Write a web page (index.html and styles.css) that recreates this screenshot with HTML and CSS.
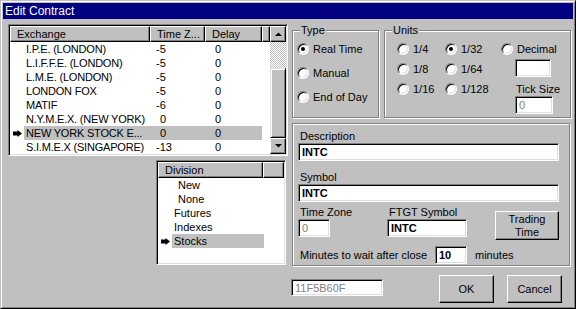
FILE: index.html
```html
<!DOCTYPE html>
<html lang="en">
<head>
  <meta charset="UTF-8">
  <title>Edit Contract</title>
  <link rel="stylesheet" href="styles.css">
</head>
<body>

  <div class="window">
    <div class="titlebar">Edit Contract</div>

    <div class="main">
      <div class="left">

        <div class="listview exchanges">
          <div class="lv-body">
            <div class="lv-header">
              <div class="hcell h-name">Exchange</div>
              <div class="hcell h-tz">Time Z...</div>
              <div class="hcell h-delay">Delay</div>
              <div class="hcell h-fill"></div>
            </div>
            <div class="lv-row"><span class="mark"></span><span class="cells"><span class="c-name">I.P.E. (LONDON)</span><span class="c-tz">-5</span><span class="c-delay">0</span></span></div>
            <div class="lv-row"><span class="mark"></span><span class="cells"><span class="c-name">L.I.F.F.E. (LONDON)</span><span class="c-tz">-5</span><span class="c-delay">0</span></span></div>
            <div class="lv-row"><span class="mark"></span><span class="cells"><span class="c-name">L.M.E. (LONDON)</span><span class="c-tz">-5</span><span class="c-delay">0</span></span></div>
            <div class="lv-row"><span class="mark"></span><span class="cells"><span class="c-name">LONDON FOX</span><span class="c-tz">-5</span><span class="c-delay">0</span></span></div>
            <div class="lv-row"><span class="mark"></span><span class="cells"><span class="c-name">MATIF</span><span class="c-tz">-6</span><span class="c-delay">0</span></span></div>
            <div class="lv-row"><span class="mark"></span><span class="cells"><span class="c-name">N.Y.M.E.X. (NEW YORK)</span><span class="c-tz pos">0</span><span class="c-delay">0</span></span></div>
            <div class="lv-row selected">
              <span class="mark">
                <svg width="9" height="7" viewBox="0 0 9 7"><path d="M0 1.5h4.5V0L9 3.5 4.5 7V5.5H0z" fill="#000"/></svg>
              </span>
              <span class="cells"><span class="c-name">NEW YORK STOCK E...</span><span class="c-tz pos">0</span><span class="c-delay">0</span></span>
            </div>
            <div class="lv-row"><span class="mark"></span><span class="cells"><span class="c-name">S.I.M.E.X (SINGAPORE)</span><span class="c-tz">-13</span><span class="c-delay">0</span></span></div>
          </div>
          <div class="scrollbar">
            <div class="sb-btn"><svg width="7" height="4" viewBox="0 0 7 4"><path d="M0 4h7L3.5 0.5z" fill="#000"/></svg></div>
            <div class="sb-track"></div>
            <div class="sb-thumb"></div>
            <div class="sb-btn"><svg width="7" height="4" viewBox="0 0 7 4"><path d="M0 0h7L3.5 3.5z" fill="#000"/></svg></div>
          </div>
        </div>

        <div class="listview divisions">
          <div class="lv-body">
            <div class="lv-header">
              <div class="hcell h-division">Division</div>
              <div class="hcell h-dfill"></div>
            </div>
            <div class="lv-row"><span class="mark"></span><span class="cells"><span class="d-name indent">New</span></span></div>
            <div class="lv-row"><span class="mark"></span><span class="cells"><span class="d-name indent">None</span></span></div>
            <div class="lv-row"><span class="mark"></span><span class="cells"><span class="d-name">Futures</span></span></div>
            <div class="lv-row"><span class="mark"></span><span class="cells"><span class="d-name">Indexes</span></span></div>
            <div class="lv-row selected">
              <span class="mark">
                <svg width="9" height="7" viewBox="0 0 9 7"><path d="M0 1.5h4.5V0L9 3.5 4.5 7V5.5H0z" fill="#000"/></svg>
              </span>
              <span class="cells"><span class="d-name">Stocks</span></span>
            </div>
          </div>
        </div>

      </div>

      <div class="right">
        <div class="top-row">
          <div class="group type-group">
            <span class="group-label">Type</span>
            <div class="type-list">
              <div class="radio"><span class="radio-dot checked"></span>Real Time</div>
              <div class="radio"><span class="radio-dot"></span>Manual</div>
              <div class="radio"><span class="radio-dot"></span>End of Day</div>
            </div>
          </div>

          <div class="group units-group">
            <span class="group-label">Units</span>
            <div class="units-body">
              <div class="units-grid">
                <div class="radio"><span class="radio-dot"></span>1/4</div>
                <div class="radio"><span class="radio-dot checked"></span>1/32</div>
                <div class="radio"><span class="radio-dot"></span>1/8</div>
                <div class="radio"><span class="radio-dot"></span>1/64</div>
                <div class="radio"><span class="radio-dot"></span>1/16</div>
                <div class="radio"><span class="radio-dot"></span>1/128</div>
              </div>
              <div class="units-extra">
                <div class="radio"><span class="radio-dot"></span>Decimal</div>
                <input class="edit decimal-edit" type="text" value="">
                <span class="tick-label">Tick Size</span>
                <input class="edit tick-edit disabled" type="text" value="0" disabled>
              </div>
            </div>
          </div>
        </div>

        <div class="group panel">
          <div class="field-label">Description</div>
          <input class="edit desc-edit" type="text" value="INTC">

          <div class="field-label symbol-label">Symbol</div>
          <input class="edit desc-edit" type="text" value="INTC">

          <div class="field-row">
            <div class="tz-col">
              <div class="field-label">Time Zone</div>
              <input class="edit tz-edit disabled" type="text" value="0" disabled>
            </div>
            <div class="ftgt-col">
              <div class="field-label">FTGT Symbol</div>
              <input class="edit ftgt-edit" type="text" value="INTC">
            </div>
            <button class="btn trading-btn">Trading<br>Time</button>
          </div>

          <div class="minutes-row">
            <span class="minutes-label">Minutes to wait after close</span>
            <input class="edit minutes-edit" type="text" value="10">
            <span class="minutes-unit">minutes</span>
          </div>
        </div>

        <div class="bottom-row">
          <input class="edit id-edit disabled" type="text" value="11F5B60F" disabled>
          <button class="btn ok-btn">OK</button>
          <button class="btn cancel-btn">Cancel</button>
        </div>
      </div>
    </div>
  </div>

</body>
</html>
```

FILE: styles.css
```css
* {
  box-sizing: border-box;
}

body {
  margin: 0;
  font-family: "Liberation Sans", Arial, sans-serif;
  font-size: 11px;
  color: #000;
  background: #c0c0c0;
}

.window {
  width: 576px;
  height: 309px;
  padding: 2px;
  overflow: hidden;
  background: #c0c0c0;
  border: 1px solid;
  border-color: #c0c0c0 #000 #000 #c0c0c0;
  box-shadow: inset 1px 1px #fff, inset -1px -1px #808080;
}

.titlebar {
  height: 16px;
  padding-left: 2px;
  line-height: 16px;
  font-size: 12px;
  background: #000080;
  color: #fff;
}

.main {
  display: flex;
}

.left {
  width: 287px;
  padding: 5px 0 0 5px;
}

/* list views */

.listview {
  display: flex;
  padding: 1px;
  overflow: hidden;
  background: #fff;
  border: 1px solid;
  border-color: #808080 #fff #fff #808080;
  box-shadow: inset 1px 1px #000, inset -1px -1px #dfdfdf;
}

.exchanges {
  width: 280px;
  height: 132px;
}

.divisions {
  width: 130px;
  height: 105px;
  margin: 4px 0 0 148px;
}

.lv-body {
  flex: 1;
  overflow: hidden;
}

.lv-header {
  display: flex;
  height: 16px;
}

.hcell {
  padding-left: 6px;
  line-height: 14px;
  white-space: nowrap;
  overflow: hidden;
  background: #c0c0c0;
  border: 1px solid;
  border-color: #fff #000 #000 #fff;
  box-shadow: inset -1px -1px #808080;
}

.h-name { width: 140px; }
.h-tz { width: 55px; }
.h-delay { width: 57px; }
.h-fill { flex: 1; }
.h-division { width: 105px; }
.h-dfill { flex: 1; }

.lv-row {
  display: flex;
  height: 14px;
  line-height: 14px;
  white-space: nowrap;
}

.mark {
  width: 14px;
  padding-left: 3px;
  display: flex;
  align-items: center;
}

.cells {
  display: flex;
}

.selected .cells {
  background: #c0c0c0;
}

.c-name { width: 126px; padding-left: 2px; letter-spacing: -0.2px; }
.c-tz { width: 55px; padding-left: 6px; }
.c-tz.pos { padding-left: 10px; }
.c-delay { width: 57px; padding-left: 10px; }

.d-name { width: 92px; padding-left: 2px; }
.d-name.indent { padding-left: 6px; }

/* scroll bar */

.scrollbar {
  width: 16px;
  display: flex;
  flex-direction: column;
}

.sb-btn {
  height: 16px;
  display: flex;
  align-items: center;
  justify-content: center;
  background: #c0c0c0;
  border: 1px solid;
  border-color: #fff #000 #000 #fff;
  box-shadow: inset -1px -1px #808080;
}

.sb-track {
  height: 26px;
  background: repeating-conic-gradient(#fff 0 25%, #c0c0c0 0 50%) 0 0 / 2px 2px;
}

.sb-thumb {
  flex: 1;
  background: #c0c0c0;
  border: 1px solid;
  border-color: #dfdfdf #000 #000 #dfdfdf;
  box-shadow: inset 1px 1px #fff, inset -1px -1px #808080;
}

/* right side */

.top-row {
  display: flex;
  margin-top: 11px;
}

.group {
  border: 1px solid #808080;
  box-shadow: inset 1px 1px #fff, 1px 1px #fff;
}

.group-label {
  display: block;
  width: fit-content;
  margin: -7px 0 0 7px;
  padding: 0 1px;
  line-height: 13px;
  background: #c0c0c0;
}

.type-group {
  width: 87px;
  height: 88px;
  margin-left: 2px;
}

.type-list {
  padding-left: 4px;
}

.type-list .radio {
  height: 24px;
}

.units-group {
  width: 187px;
  height: 88px;
  margin-left: 5px;
}

.units-body {
  display: flex;
  padding: 2px 0 0 12px;
}

.units-grid {
  display: grid;
  grid-template-columns: 48px 56px;
  grid-auto-rows: 20px;
}

.units-extra {
  display: flex;
  flex-direction: column;
  align-items: flex-start;
}

.radio {
  display: flex;
  align-items: center;
  gap: 4px;
  height: 20px;
  white-space: nowrap;
}

.radio-dot {
  width: 12px;
  height: 12px;
  display: flex;
  align-items: center;
  justify-content: center;
  border-radius: 50%;
  background: #fff;
  border: 1px solid;
  border-color: #808080 #fff #fff #808080;
  box-shadow: inset 1px 1px #000, inset -1px -1px #dfdfdf;
}

.radio-dot.checked::after {
  content: "";
  width: 4px;
  height: 4px;
  border-radius: 50%;
  background: #000;
}

/* edit boxes */

.edit {
  display: block;
  height: 18px;
  margin: 0;
  padding: 0 3px;
  font: bold 11px "Liberation Sans", Arial, sans-serif;
  color: #000;
  background: #fff;
  outline: none;
  border: 1px solid;
  border-color: #808080 #fff #fff #808080;
  box-shadow: inset 1px 1px #000, inset -1px -1px #dfdfdf;
}

.edit.disabled {
  font-weight: normal;
  color: #808080;
}

.decimal-edit {
  width: 36px;
  margin-left: 14px;
}

.tick-label {
  margin: 6px 0 0 15px;
  line-height: 13px;
}

.tick-edit {
  width: 38px;
  margin-left: 14px;
}

.panel {
  width: 278px;
  height: 143px;
  margin: 5px 0 0 2px;
  padding: 6px 0 0 5px;
}

.field-label {
  padding-left: 2px;
  line-height: 13px;
}

.desc-edit {
  width: 261px;
}

.symbol-label {
  margin-top: 10px;
}

.field-row {
  display: flex;
  align-items: flex-start;
  margin-top: 4px;
}

.tz-col {
  width: 89px;
}

.tz-edit {
  width: 32px;
}

.ftgt-col {
  width: 80px;
}

.ftgt-edit {
  width: 80px;
}

.btn {
  padding: 0;
  font: 11px "Liberation Sans", Arial, sans-serif;
  color: #000;
  background: #c0c0c0;
  border: 1px solid;
  border-color: #fff #000 #000 #fff;
  box-shadow: inset -1px -1px #808080;
}

.trading-btn {
  width: 64px;
  height: 29px;
  margin: 5px 0 0 28px;
  line-height: 13px;
}

.minutes-row {
  display: flex;
  align-items: center;
  margin-top: 6px;
}

.minutes-label {
  width: 137px;
  padding-left: 2px;
}

.minutes-edit {
  width: 32px;
}

.minutes-unit {
  margin-left: 8px;
}

.bottom-row {
  display: flex;
  align-items: flex-start;
  margin-top: 9px;
}

.id-edit {
  width: 92px;
  height: 17px;
  margin: 4px 0 0 1px;
}

.ok-btn {
  width: 55px;
  height: 28px;
  margin-left: 56px;
}

.cancel-btn {
  width: 55px;
  height: 28px;
  margin-left: 13px;
}
```
